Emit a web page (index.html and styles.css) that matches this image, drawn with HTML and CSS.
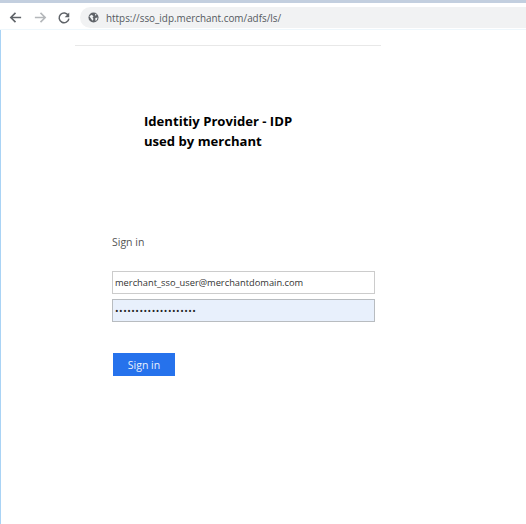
FILE: index.html
```html
<!DOCTYPE html>
<html lang="en">
<head>
    <meta charset="UTF-8">
    <title>Sign in</title>
    <link rel="stylesheet" href="styles.css">
</head>
<body>
    <div class="toolbar">
        <svg class="nav-icon" viewBox="0 0 16 16"><path d="M14 8H3M8 3L3 8l5 5" fill="none" stroke="#5f6368" stroke-width="1.7"/></svg>
        <svg class="nav-icon" viewBox="0 0 16 16"><path d="M2 8h11M8 3l5 5-5 5" fill="none" stroke="#b4b7ba" stroke-width="1.7"/></svg>
        <svg class="nav-icon" viewBox="0 0 16 16"><path d="M13 5.200A5.600 5.600 0 1 0 13.600 8.600" fill="none" stroke="#5f6368" stroke-width="1.700"/><path d="M14 1.800V7H8.800z" fill="#5f6368"/></svg>
        <div class="omnibox">
            <svg class="globe" viewBox="0 0 12 12"><circle cx="6" cy="6" r="5.500" fill="#5f6368"/><path d="M1.500 4.500L4 3l2 1.500-1 1.500 1 1.500-1 2-1.500-2zM7.500 1.500L9.500 3 8 4zM8 6.500l2.500-.5-1 3-1.500.5z" fill="#f1f3f4"/></svg>
            <span class="url">https://sso_idp.merchant.com/adfs/ls/</span>
        </div>
    </div>
    <div class="page">
        <div class="top-rule"></div>
        <h1 class="banner">Identitiy Provider - IDP<br>used by merchant</h1>
        <form class="login">
            <p class="login-title">Sign in</p>
            <div class="field">merchant_sso_user@merchantdomain.com</div>
            <div class="field field-filled">••••••••••••••••••••</div>
            <button class="submit" type="button">Sign in</button>
        </form>
    </div>
</body>
</html>
```

FILE: styles.css
```css
html, body {
    margin: 0;
    padding: 0;
}
body {
    width: 526px;
    height: 524px;
    overflow: hidden;
    background-color: #fff;
    font-family: "Open Sans", "Noto Sans", sans-serif;
    color: #444;
}
.toolbar {
    display: flex;
    align-items: center;
    box-sizing: border-box;
    height: 30px;
    padding: 3px 0 0 8px;
    border-top: 3px solid #c3cfdf;
    border-bottom: 1px solid #eef7fc;
}
.nav-icon {
    width: 15px;
    height: 15px;
    margin-right: 10px;
}
.nav-icon:nth-child(3) {
    width: 14px;
    height: 14px;
    margin-left: -1px;
}
.omnibox {
    display: flex;
    align-items: center;
    flex: 1;
    height: 21px;
    margin-left: -1px;
    padding-left: 8px;
    background-color: #f1f2f3;
    border-radius: 11px 0 0 11px;
}
.globe {
    width: 11px;
    height: 11px;
    margin-right: 7px;
}
.url {
    font-size: 9.900px;
    color: #555a5f;
}
.page {
    height: 494px;
    border-left: 1px solid #a9d3f5;
}
.top-rule {
    width: 306px;
    height: 1px;
    margin-left: 74px;
    padding-top: 14px;
    border-bottom: 1px solid #e8e8e8;
}
.banner {
    margin: 65px 0 0 143px;
    font-family: "Open Sans", sans-serif;
    font-size: 13.100px;
    font-weight: 700;
    line-height: 20px;
    color: #000;
}
.login {
    display: flex;
    flex-direction: column;
    align-items: flex-start;
    margin-left: 111px;
}
.login-title {
    margin: 83px 0 0 0;
    font-size: 10.500px;
    line-height: 16px;
    color: #555;
}
.field {
    box-sizing: border-box;
    width: 263px;
    height: 23px;
    margin-top: 21px;
    padding-left: 2px;
    border: 1px solid #ccc;
    font-size: 9.300px;
    line-height: 21px;
    color: #333;
}
.field-filled {
    margin-top: 5px;
    background-color: #e8f0fc;
    border-color: #b8bcc0;
    font-size: 9.500px;
    letter-spacing: 0.5px;
    color: #222;
}
.submit {
    width: 62px;
    height: 23px;
    margin: 31px 0 0 1px;
    padding: 0;
    border: none;
    background-color: #2672ec;
    color: #e8f0fc;
    font-family: inherit;
    font-size: 10.500px;
}
```
